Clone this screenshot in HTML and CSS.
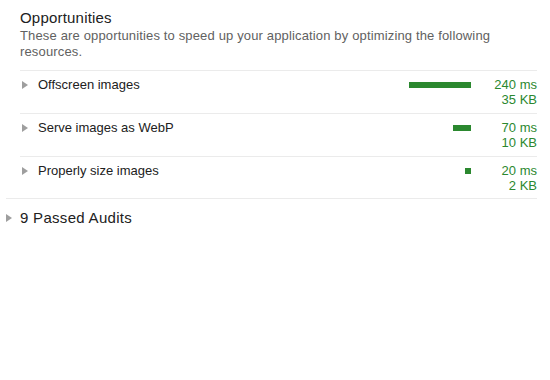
FILE: index.html
```html
<!DOCTYPE html>
<html lang="en">
<head>
<meta charset="UTF-8">
<meta name="viewport" content="width=device-width, initial-scale=1.0">
<title>Opportunities</title>
<link rel="stylesheet" href="styles.css">
</head>
<body>
    <div class="report">
        <div class="group">
            <div class="group-head">
                <h2>Opportunities</h2>
                <p>These are opportunities to speed up your application by optimizing the following resources.</p>
            </div>
            <div class="audits">
                <div class="audit">
                    <span class="arrow"></span>
                    <span class="audit-title">Offscreen images</span>
                    <div class="bar-wrap"><div class="bar" style="width: 62px"></div></div>
                    <div class="values">
                        <div>240 ms</div>
                        <div>35 KB</div>
                    </div>
                </div>
                <div class="audit">
                    <span class="arrow"></span>
                    <span class="audit-title">Serve images as WebP</span>
                    <div class="bar-wrap"><div class="bar" style="width: 18px"></div></div>
                    <div class="values">
                        <div>70 ms</div>
                        <div>10 KB</div>
                    </div>
                </div>
                <div class="audit">
                    <span class="arrow"></span>
                    <span class="audit-title">Properly size images</span>
                    <div class="bar-wrap"><div class="bar" style="width: 6px"></div></div>
                    <div class="values">
                        <div>20 ms</div>
                        <div>2 KB</div>
                    </div>
                </div>
            </div>
        </div>
        <div class="passed">
            <span class="arrow"></span>
            <span>9 Passed Audits</span>
        </div>
    </div>
</body>
</html>
```

FILE: styles.css
```css
body {
    font-family: "Liberation Sans", Arial, sans-serif;
    margin: 0;
    padding: 0;
    color: #212121;
}
.report {
    width: 531px;
    margin-left: 6px;
    padding-top: 9px;
}
.group {
    border-bottom: 1px solid #ebebeb;
}
.group-head {
    padding-left: 14px;
    padding-bottom: 10px;
}
.group-head h2 {
    margin: 0 0 1px 0;
    font-size: 15px;
    line-height: 18px;
    font-weight: normal;
    letter-spacing: 0.2px;
}
.group-head p {
    margin: 0;
    font-size: 13px;
    line-height: 16px;
    color: #616161;
    letter-spacing: 0.15px;
}
.audits {
    margin-left: 14px;
}
.audit {
    display: flex;
    align-items: flex-start;
    border-top: 1px solid #ebebeb;
    padding: 6px 0;
    font-size: 13px;
    line-height: 15px;
}
.audit:last-child {
    padding-bottom: 5px;
}
.arrow {
    width: 0;
    height: 0;
    border-top: 4px solid transparent;
    border-bottom: 4px solid transparent;
    border-left: 6px solid #9e9e9e;
    margin: 4px 10px 0 2px;
}
.audit-title {
    flex: 1;
}
.bar-wrap {
    width: 80px;
    display: flex;
    justify-content: flex-end;
    padding-top: 5px;
}
.bar {
    height: 6px;
    background: #2b882f;
}
.values {
    width: 66px;
    text-align: right;
    color: #2b882f;
}
.passed {
    display: flex;
    align-items: center;
    font-size: 15px;
    line-height: 18px;
    padding-top: 10px;
    letter-spacing: 0.3px;
}
.passed .arrow {
    margin: 0 8px 0 0;
}
```
